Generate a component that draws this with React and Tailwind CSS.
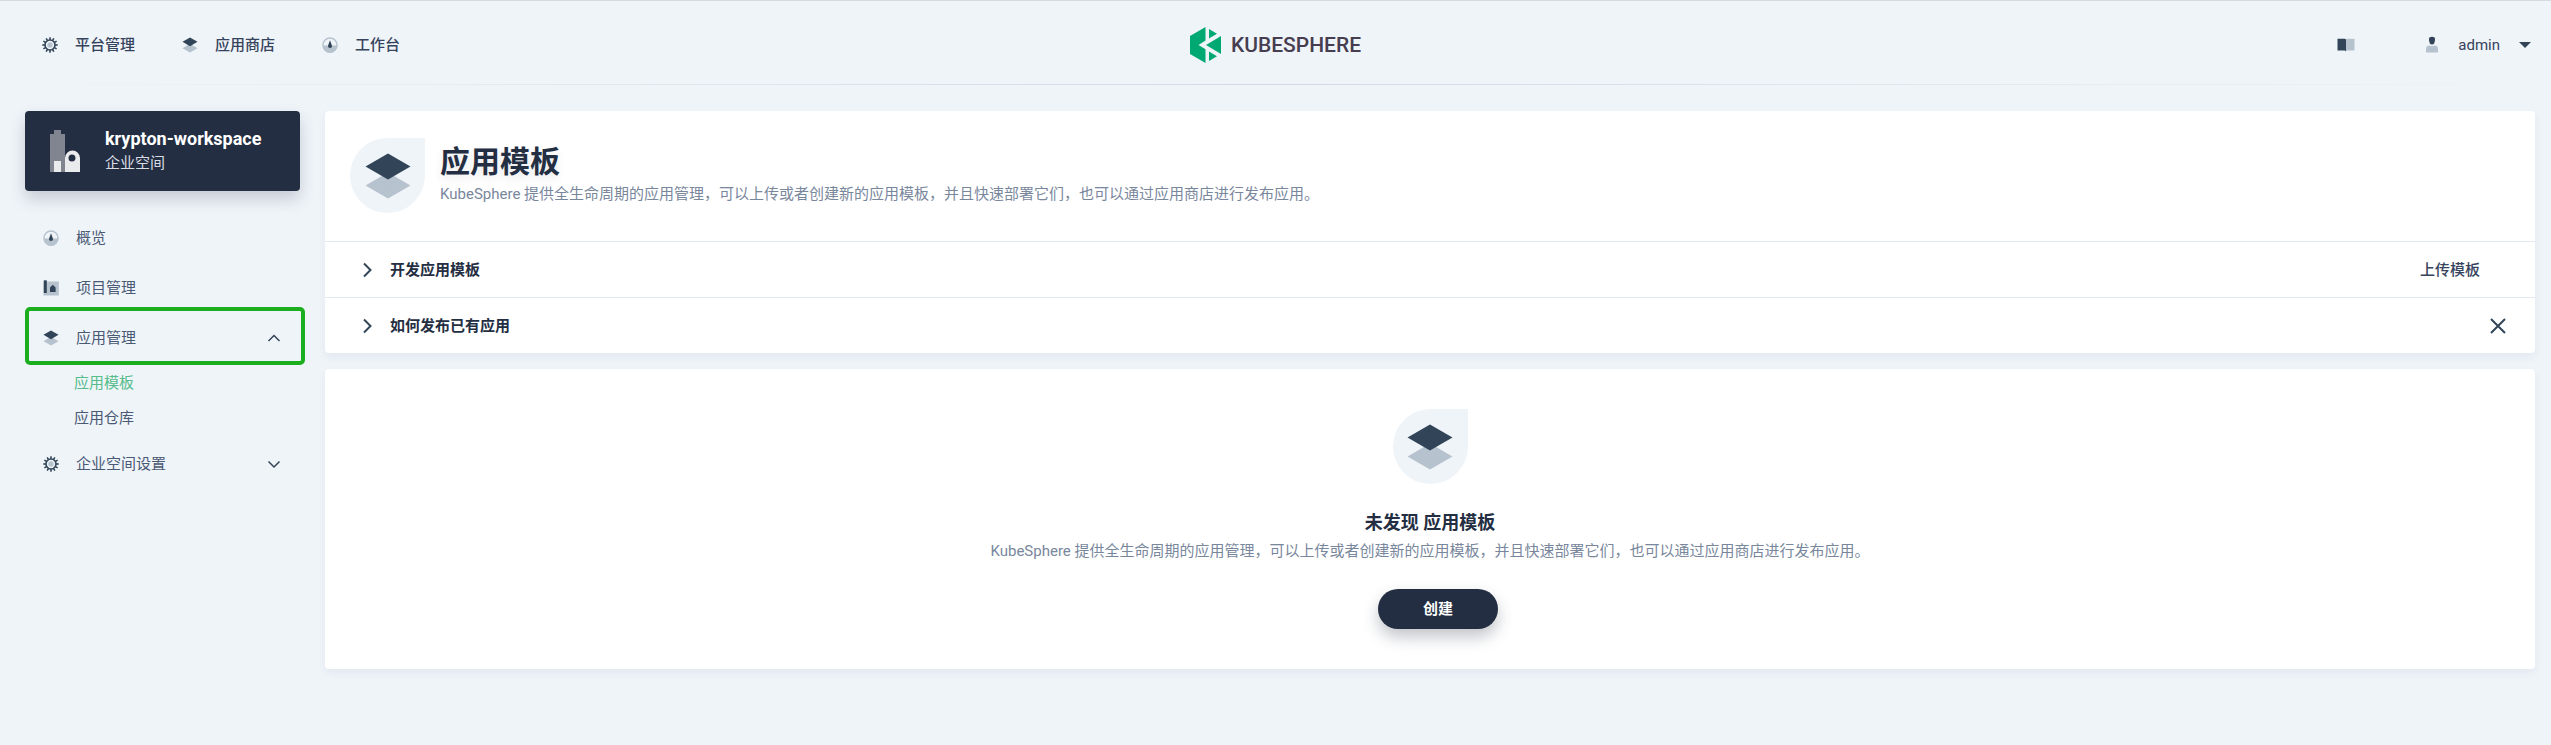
import React from "react";

const DARK = "#324558";
const LIGHT = "#b6c2cd";

function GearIcon() {
  const teeth = [0, 30, 60, 90, 120, 150, 180, 210, 240, 270, 300, 330];
  return (
    <svg viewBox="0 0 16 16" className="size-4 shrink-0" aria-hidden="true">
      {teeth.map((a) => (
        <rect key={a} x="7.2" y="0.3" width="1.6" height="3" fill={DARK} transform={`rotate(${a} 8 8)`} />
      ))}
      <circle cx="8" cy="8" r="5" fill="#eff4f9" stroke={DARK} strokeWidth="1.6" />
      <circle cx="8" cy="8" r="2.7" fill={LIGHT} />
    </svg>
  );
}

function LayersIcon({ className }) {
  return (
    <svg viewBox="0 0 48 48" className={className} aria-hidden="true">
      <path d="M24 20.5 46.500 33.5 24 46.500 1.500 33.5Z" fill={LIGHT} />
      <path d="M24 1.5 46.500 14.5 24 27.5 1.500 14.5Z" fill={DARK} />
    </svg>
  );
}

function GaugeIcon() {
  return (
    <svg viewBox="0 0 16 16" className="size-4 shrink-0" aria-hidden="true">
      <circle cx="8" cy="8" r="7" fill="#eff4f9" stroke={LIGHT} strokeWidth="1.4" />
      <path d="M.5 8.500H15.500A7.500 7.500 0 0 1 .5 8.500Z" fill={LIGHT} />
      <path d="M8 3.200 9.900 8.400A2 2 0 1 1 6.100 8.400Z" fill={DARK} />
    </svg>
  );
}

function ProjectIcon() {
  return (
    <svg viewBox="0 0 16 16" className="size-4 shrink-0" aria-hidden="true">
      <path d="M.5 1.500H15.800V15.500H.5Z" fill={LIGHT} />
      <path d="M.8.3H3.800V13H.8Z" fill={DARK} />
      <path d="M7 12V7.500L9.800 4.800 12.600 7.500V12Z" fill={DARK} />
    </svg>
  );
}

function Chevron({ d, className }) {
  return (
    <svg viewBox="0 0 16 16" className={className} fill="none" stroke={DARK} strokeWidth="1.5" aria-hidden="true">
      <path d={d} />
    </svg>
  );
}

function Drop() {
  return (
    <div className="flex size-[75px] shrink-0 items-center justify-center rounded-full rounded-tr-none bg-[#eff4f9]">
      <LayersIcon className="size-12" />
    </div>
  );
}

function TopLink({ icon, children }) {
  return (
    <a href="#" className="flex items-center gap-[17px] font-medium text-[#36435c]">
      {icon}
      <span className="leading-5">{children}</span>
    </a>
  );
}

function SideItem({ icon, children, chevron, marked }) {
  return (
    <button type="button" className="relative flex h-[50px] w-full items-center gap-[17px] px-[18px] text-left text-[#4a5974]">
      {icon}
      <span className="flex-1">{children}</span>
      {chevron && <Chevron d={chevron} className="size-4" />}
      {marked && (
        <span className="pointer-events-none absolute -top-[6px] -right-[5px] -bottom-[2px] left-0 rounded-[5px] border-4 border-[#1bae1f]" />
      )}
    </button>
  );
}

function HelpRow({ title, children }) {
  return (
    <div className="flex h-14 items-center border-t border-[#e3e9ef] pr-[27px] pl-[34px]">
      <button type="button" className="flex items-center gap-[15px] font-bold text-[#242e42]">
        <Chevron d="M5 1.500 11.500 8 5 14.500" className="size-4 [stroke-width:2]" />
        <span>{title}</span>
      </button>
      <div className="ml-auto flex items-center">{children}</div>
    </div>
  );
}

const DESCRIPTION =
  "KubeSphere 提供全生命周期的应用管理，可以上传或者创建新的应用模板，并且快速部署它们，也可以通过应用商店进行发布应用。";

export default function App() {
  return (
    <div className="min-h-screen border-t border-[#d8dae2] bg-[#eff4f9] font-['Roboto','Noto_Sans_CJK_SC',sans-serif] text-[15px] leading-5 text-[#242e42]">
      <header className="grid h-[83px] grid-cols-3 items-center px-5 pt-1">
        <nav className="flex gap-[47px] pl-[22px]">
          <TopLink icon={<GearIcon />}>平台管理</TopLink>
          <TopLink icon={<LayersIcon className="size-4" />}>应用商店</TopLink>
          <TopLink icon={<GaugeIcon />}>工作台</TopLink>
        </nav>
        <a href="#" className="flex items-center gap-[10px] justify-self-center text-[#463d50]">
          <svg viewBox="0 0 31 36" className="h-9 w-[31px]" fill="#00a971" aria-hidden="true">
            <path d="M15.500 0V13.500L8.500 18 15.500 22.300V36L0 27V9Z" />
            <path d="M19 2 27 6.700 19 11.500Z" />
            <path d="M31 9V27L16 18Z" />
            <path d="M19 24.500 27 29.300 19 34Z" />
          </svg>
          <span className="text-[21px] leading-8 font-medium">KUBESPHERE</span>
        </a>
        <div className="flex items-center justify-end text-[#36435c]">
          <button type="button" aria-label="文档" className="mr-[70px]">
            <svg viewBox="0 0 18 14" className="h-[14px] w-[18px]" aria-hidden="true">
              <path d="M9 1.500 10 .8H17.500V12.500H10L9 13.500Z" fill={LIGHT} />
              <path d="M.5.8H8L9 1.500V13.500L8 12.500H.5Z" fill={DARK} />
            </svg>
          </button>
          <button type="button" className="flex items-center">
            <svg viewBox="0 0 14 18" className="h-[18px] w-[14px]" aria-hidden="true">
              <path d="M4 3Q4 .8 7 .8T10 3Q10 8.500 7 8.500T4 3Z" fill={DARK} />
              <path d="M1 16.500V13Q1 9.500 4.500 9.500 7 10.500 9.500 9.500 13 9.500 13 13V16.500Z" fill={LIGHT} />
            </svg>
            <span className="ml-[19px]">admin</span>
            <svg viewBox="0 0 12 6" className="ml-[19px] h-[6px] w-3" fill={DARK} aria-hidden="true">
              <path d="M0 0H12L6 6Z" />
            </svg>
          </button>
        </div>
      </header>
      <div className="h-px bg-linear-to-r from-[#eff4f9] via-[#d3dae6] to-[#eff4f9]" />

      <div className="flex gap-[25px] py-[26px] pr-4 pl-[25px]">
        <aside className="w-[275px] shrink-0">
          <button type="button" className="flex h-20 w-full items-center gap-[25px] rounded bg-[#242e42] px-[25px] text-left shadow-[0_8px_16px_rgba(36,46,66,0.2)]">
            <svg viewBox="0 0 30 42" className="h-[42px] w-[30px]" aria-hidden="true">
              <path d="M0 4H4V0H11V4H15V42H0Z" fill="#80858f" />
              <path d="M4 31H11V42H4Z" fill="#eaebec" />
              <path fillRule="evenodd" d="M15 42V28A7.500 7.500 0 0 1 30 28V42ZM22 24.500A3.500 3.500 0 1 0 22 31.500 3.500 3.500 0 0 0 22 24.500Z" fill="#eaebec" />
            </svg>
            <span>
              <span className="block text-[18px] leading-6 font-bold text-white">krypton-workspace</span>
              <span className="block leading-6 text-[#d8dce3]">企业空间</span>
            </span>
          </button>
          <nav className="pt-[22px]">
            <SideItem icon={<GaugeIcon />}>概览</SideItem>
            <SideItem icon={<ProjectIcon />}>项目管理</SideItem>
            <SideItem icon={<LayersIcon className="size-4" />} chevron="M2.500 11 8 5.500 13.500 11" marked>
              应用管理
            </SideItem>
            <div className="flex flex-col pt-[2px] pb-1 pl-[49px]">
              <a href="#" className="flex h-[35px] items-center text-[#55bc8a]">应用模板</a>
              <a href="#" className="flex h-[35px] items-center text-[#4a5974]">应用仓库</a>
            </div>
            <SideItem icon={<GearIcon />} chevron="M2.500 5.500 8 11 13.500 5.500">
              企业空间设置
            </SideItem>
          </nav>
        </aside>

        <main className="flex min-w-0 flex-1 flex-col gap-4">
          <section className="rounded bg-white shadow-[0_4px_8px_rgba(36,46,66,0.06)]">
            <div className="flex gap-[15px] px-[25px] pt-[27px] pb-7">
              <Drop />
              <div>
                <h1 className="mt-1 text-[30px] leading-10 font-bold [text-shadow:0_4px_8px_rgba(36,46,66,0.1)]">应用模板</h1>
                <p className="leading-6 text-[#79879c]">{DESCRIPTION}</p>
              </div>
            </div>
            <HelpRow title="开发应用模板">
              <button type="button" className="mr-7 font-medium text-[#36435c]">上传模板</button>
            </HelpRow>
            <HelpRow title="如何发布已有应用">
              <button type="button" aria-label="关闭">
                <svg viewBox="0 0 20 20" className="size-5" fill="none" stroke={DARK} strokeWidth="2" aria-hidden="true">
                  <path d="M3 3 17 17M17 3 3 17" />
                </svg>
              </button>
            </HelpRow>
          </section>

          <section className="flex flex-col items-center rounded bg-white py-10 shadow-[0_4px_8px_rgba(36,46,66,0.06)]">
            <Drop />
            <h2 className="mt-[25px] text-[18px] leading-7 font-bold">未发现 应用模板</h2>
            <p className="leading-7 text-[#79879c]">{DESCRIPTION}</p>
            <button type="button" className="mt-6 ml-4 h-10 w-[120px] rounded-full bg-[#242e42] font-bold text-white shadow-[0_8px_16px_rgba(36,46,66,0.28)]">
              创建
            </button>
          </section>
        </main>
      </div>
    </div>
  );
}
